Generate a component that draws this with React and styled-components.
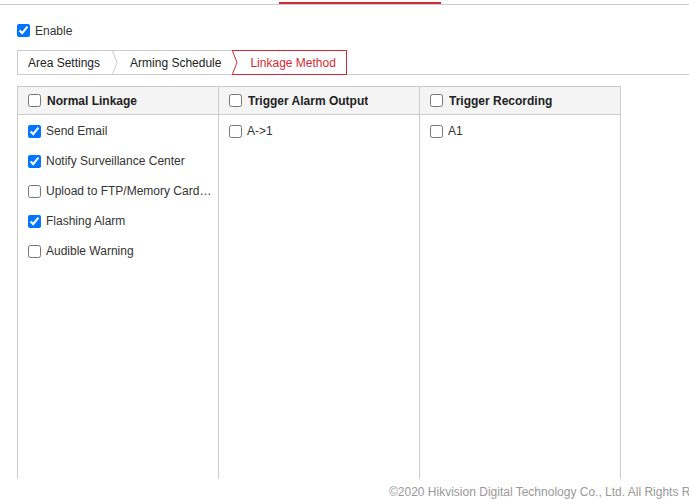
import React from "react";
import styled, { createGlobalStyle } from "styled-components";

const Global = createGlobalStyle`
  html, body { margin: 0; padding: 0; background: #fff; }
  body {
    font-family: "Liberation Sans", Arial, Helvetica, sans-serif;
    font-size: 12px;
    color: #333;
    overflow: hidden;
  }
`;

const RED = "#d42a36";
const LINE = "#cccccc";

const Page = styled.div`
  width: 689px;
  height: 499px;
  overflow: hidden;
`;

const TopStrip = styled.div`
  height: 2px;
  padding-top: 2px;
  border-bottom: 1px solid ${LINE};
  box-sizing: content-box;
`;

const ActiveMenuBar = styled.div`
  margin-left: 279px;
  width: 162px;
  height: 2px;
  background: ${RED};
`;

const Content = styled.div`
  padding-left: 17px;
  padding-top: 19px;
`;

const CheckRow = styled.label`
  display: flex;
  align-items: center;
  gap: ${(p) => p.$gap || 5}px;
  height: 13px;
  white-space: nowrap;
  min-width: 0;
  font-weight: ${(p) => (p.$bold ? "bold" : "normal")};
  color: ${(p) => (p.$bold ? "#222" : "#333")};
`;

const Box = styled.input.attrs({ type: "checkbox" })`
  margin: 0;
  width: 13px;
  height: 13px;
  flex: none;
`;

const Label = styled.span`
  overflow: hidden;
  text-overflow: ellipsis;
  min-width: 0;
`;

const TabBar = styled.div`
  display: flex;
  margin-top: 13px;
  height: 25px;
`;

const Tab = styled.div`
  display: flex;
  align-items: stretch;
  box-sizing: border-box;
  height: 25px;
  border-top: 1px solid ${(p) => (p.$active ? RED : LINE)};
  border-bottom: 1px solid ${(p) => (p.$active ? RED : LINE)};
  border-left: ${(p) => (p.$first ? `1px solid ${LINE}` : "none")};
  border-right: ${(p) => (p.$active ? `1px solid ${RED}` : "none")};
  color: ${(p) => (p.$active ? RED : "#222")};
`;

const TabText = styled.span`
  display: flex;
  align-items: center;
  padding: 0 ${(p) => p.$pr}px 0 ${(p) => p.$pl}px;
  white-space: nowrap;
`;

const TabFill = styled.div`
  flex: 1;
  border-bottom: 1px solid ${LINE};
`;

const Chevron = ({ color }) => (
  <svg width="6" height="23" viewBox="0 0 6 23" style={{ display: "block", flex: "none" }}>
    <polyline points="0.5,0 5,11.5 0.5,23" fill="none" stroke={color} strokeWidth="1" />
  </svg>
);

const Table = styled.div`
  margin-top: 11px;
  width: 604px;
  height: 393px;
  box-sizing: border-box;
  display: grid;
  grid-template-columns: repeat(3, 1fr);
  border-top: 1px solid ${LINE};
  border-left: 1px solid ${LINE};
`;

const Column = styled.div`
  border-right: 1px solid ${LINE};
  display: flex;
  flex-direction: column;
  min-width: 0;
`;

const Head = styled.div`
  height: 27px;
  border-bottom: 1px solid ${LINE};
  background: #f4f4f4;
  display: flex;
  align-items: center;
  padding-left: 10px;
`;

const Body = styled.div`
  padding: 1px 4px 0 10px;
  display: flex;
  flex-direction: column;
  min-width: 0;
`;

const Item = styled(CheckRow)`
  height: 30px;
`;

const Footer = styled.div`
  margin-top: 6px;
  padding-left: 389px;
  white-space: nowrap;
  color: #999;
  font-size: 12px;
`;

const columns = [
  {
    title: "Normal Linkage",
    items: [
      ["Send Email", true],
      ["Notify Surveillance Center", true],
      ["Upload to FTP/Memory Card/NAS", false],
      ["Flashing Alarm", true],
      ["Audible Warning", false],
    ],
  },
  { title: "Trigger Alarm Output", items: [["A->1", false]] },
  { title: "Trigger Recording", items: [["A1", false]] },
];

export default function App() {
  return (
    <Page>
      <Global />
      <TopStrip>
        <ActiveMenuBar />
      </TopStrip>
      <Content>
        <CheckRow>
          <Box defaultChecked />
          <span>Enable</span>
        </CheckRow>
        <TabBar>
          <Tab $first>
            <TabText $pl={10} $pr={12}>Area Settings</TabText>
          </Tab>
          <Tab>
            <Chevron color={LINE} />
            <TabText $pl={12} $pr={11}>Arming Schedule</TabText>
          </Tab>
          <Tab $active>
            <Chevron color={RED} />
            <TabText $pl={12} $pr={10}>Linkage Method</TabText>
          </Tab>
          <TabFill />
        </TabBar>
        <Table>
          {columns.map((c) => (
            <Column key={c.title}>
              <Head>
                <CheckRow $bold $gap={6}>
                  <Box />
                  <Label>{c.title}</Label>
                </CheckRow>
              </Head>
              <Body>
                {c.items.map(([t, on]) => (
                  <Item key={t}>
                    <Box defaultChecked={on} />
                    <Label>{t}</Label>
                  </Item>
                ))}
              </Body>
            </Column>
          ))}
        </Table>
      </Content>
      <Footer>©2020 Hikvision Digital Technology Co., Ltd. All Rights Reserved.</Footer>
    </Page>
  );
}
